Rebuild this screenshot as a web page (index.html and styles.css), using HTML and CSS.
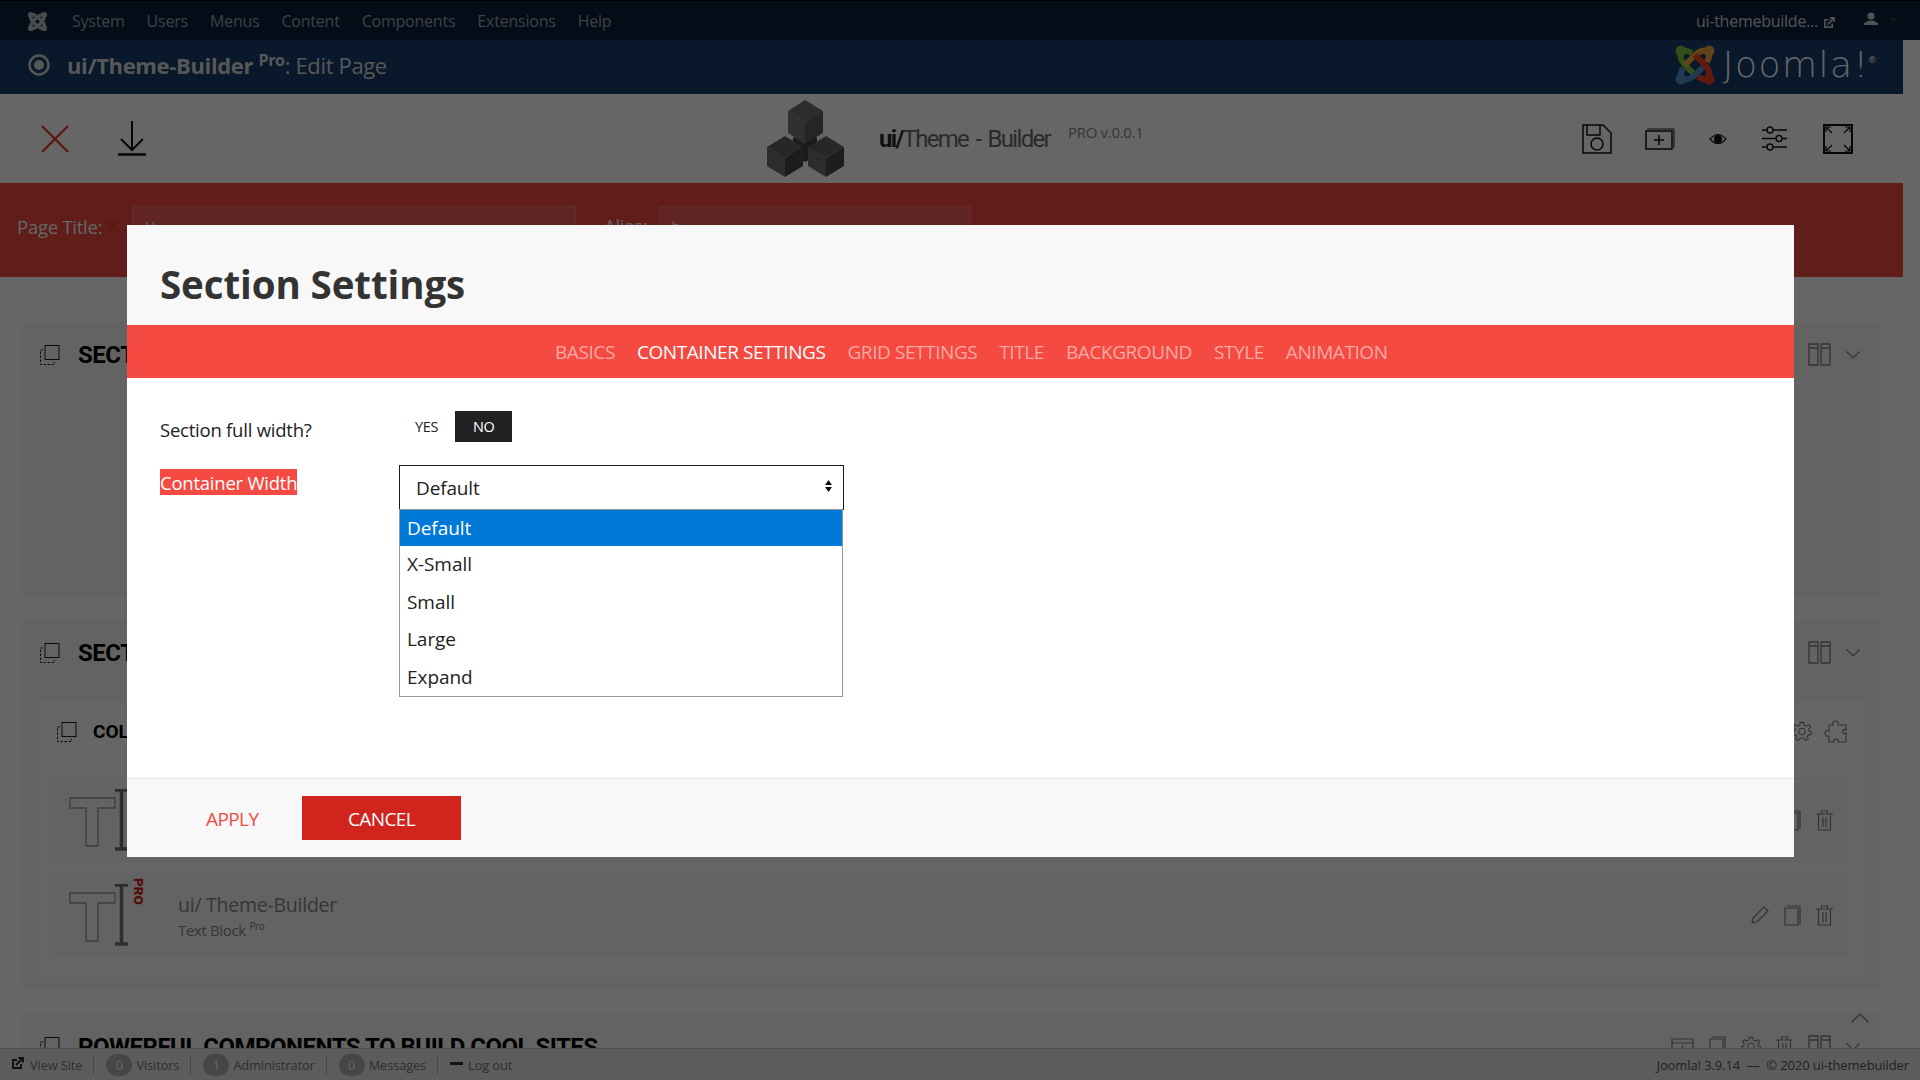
FILE: index.html
```html
<!DOCTYPE html>
<html lang="en">
<head>
<meta charset="utf-8">
<title>ui/Theme-Builder Pro: Edit Page</title>
<link rel="stylesheet" href="styles.css">
</head>
<body>
<div class="page">
  <nav class="topbar">
    <svg class="topmark" viewBox="0 0 40 40"><g fill="none" stroke="#b7bcc4" stroke-width="7"><path d="M6 6Q4 14 10 20L20 30M6 6Q12 5 17 8"/><path d="M34 6Q26 4 20 10L10 20M34 6Q35 12 32 17"/><path d="M34 34Q36 26 30 20L20 10M34 34Q28 35 23 32"/><path d="M6 34Q14 36 20 30L30 20M6 34Q5 28 8 23"/></g><g fill="#b7bcc4"><circle cx="6" cy="6" r="6"/><circle cx="34" cy="6" r="6"/><circle cx="34" cy="34" r="6"/><circle cx="6" cy="34" r="6"/></g></svg>
    <ul class="menu">
      <li>System</li><li>Users</li><li>Menus</li><li>Content</li><li>Components</li><li>Extensions</li><li>Help</li>
    </ul>
    <div class="topright">
      <span>ui-themebuilde...</span>
      <svg class="ext" viewBox="0 0 12 12"><path d="M9 7v4H1V3h4" fill="none" stroke="#c8ced6" stroke-width="1.800"/><path d="M4 8l6-6M6.500 1H11v4.500" fill="none" stroke="#c8ced6" stroke-width="1.800"/></svg>
      <svg class="usr" viewBox="0 0 14 13"><circle cx="7" cy="4" r="3.600" fill="#c8ced6"/><path d="M0 13V11L5 8.500H9L14 11V13Z" fill="#c8ced6"/></svg>
      <i class="caret"></i>
    </div>
  </nav>
  <div class="subhead">
    <svg class="target" viewBox="0 0 22 22"><circle cx="11" cy="11" r="9.500" fill="none" stroke="#d8dadd" stroke-width="2.400"/><circle cx="11" cy="11" r="5" fill="#d8dadd"/></svg>
    <h1 class="pagehead"><b>ui/Theme-Builder</b> <sup>Pro</sup>: Edit Page</h1>
    <div class="jlogo">
      <svg class="jmark" viewBox="0 0 40 40"><g fill="none" stroke-width="6"><path d="M6 6Q4 14 10 20L20 30M6 6Q12 5 17 8" stroke="#7fc242"/><path d="M34 6Q26 4 20 10L10 20M34 6Q35 12 32 17" stroke="#f4a641"/><path d="M6 34Q14 36 20 30L30 20M6 34Q5 28 8 23" stroke="#5091cd"/><path d="M34 34Q36 26 30 20L20 10M34 34Q28 35 23 32" stroke="#f44321"/></g><circle cx="6" cy="6" r="5.500" fill="#7fc242"/><circle cx="34" cy="6" r="5.500" fill="#f4a641"/><circle cx="34" cy="34" r="5.500" fill="#f44321"/><circle cx="6" cy="34" r="5.500" fill="#5091cd"/></svg>
      <span class="jword">Joomla!</span><sup class="jreg">®</sup>
    </div>
  </div>
  <div class="content">
    <header class="toolbar">
      <div class="tool-left">
        <svg class="ic-close" viewBox="0 0 28 28"><path d="M1 1L27 27M27 1L1 27" fill="none" stroke="#e6402c" stroke-width="2.400"/></svg>
        <svg class="ic-down" viewBox="0 0 28 35"><path d="M14 0V28M3 18L14 29L25 18" fill="none" stroke="#111" stroke-width="2"/><path d="M0 33.500H28" stroke="#111" stroke-width="2.500"/></svg>
      </div>
      <div class="brand">
        <svg class="cubes" viewBox="0 0 77 78">
          <path d="M38 30L50 38L50 56L38 62L26 56L26 38Z" fill="#444"/>
          <path d="M38 0L56 11L38 22L21 11Z" fill="#6e6e6e"/><path d="M21 11L38 22V44L21 33Z" fill="#787878"/><path d="M56 11L38 22V44L56 33Z" fill="#5c5c5c"/>
          <path d="M18 36L36 47L18 58L0 47Z" fill="#626262"/><path d="M0 47L18 58V77L0 66Z" fill="#6e6e6e"/><path d="M36 47L18 58V77L36 66Z" fill="#4a4a4a"/>
          <path d="M59 36L77 47L59 58L41 47Z" fill="#626262"/><path d="M41 47L59 58V77L41 66Z" fill="#6e6e6e"/><path d="M77 47L59 58V77L77 66Z" fill="#4a4a4a"/>
        </svg>
        <span class="brandname"><b>ui/</b>Theme - Builder</span>
        <span class="brandver">PRO v.0.0.1</span>
      </div>
      <div class="tool-right">
        <svg class="ic30" viewBox="0 0 30 30"><path d="M1 1H21L29 9V29H1Z" fill="none" stroke="#111" stroke-width="1.500"/><path d="M5 1V11H18V1" fill="none" stroke="#111" stroke-width="1.500"/><circle cx="15" cy="20" r="6" fill="none" stroke="#111" stroke-width="1.500"/></svg>
        <svg class="ic-newtab" viewBox="0 0 30 23"><path d="M1 4H27V22H1Z" fill="none" stroke="#111" stroke-width="1.500"/><path d="M2 2H29V21" fill="none" stroke="#222" stroke-width="1"/><path d="M14 8V18M9 13H19" stroke="#111" stroke-width="1.500"/></svg>
        <svg class="ic-eye" viewBox="0 0 18 12"><path d="M1 6Q9 -3 17 6Q9 15 1 6Z" fill="none" stroke="#111" stroke-width="1.200"/><circle cx="9" cy="6" r="4" fill="#111"/></svg>
        <svg class="ic-sliders" viewBox="0 0 25 25"><g fill="none" stroke="#111" stroke-width="1.400"><path d="M0 4H5M11 4H25M0 12.500H14M20 12.500H25M0 21H5M11 21H25"/><circle cx="8" cy="4" r="3"/><circle cx="17" cy="12.500" r="3"/><circle cx="8" cy="21" r="3"/></g></svg>
        <svg class="ic30" viewBox="0 0 30 30"><path d="M1 1H29V29H1Z" fill="none" stroke="#111" stroke-width="2"/><path d="M3 3L9 9M3 8V3H8M27 3L21 9M27 8V3H22M3 27L9 21M3 22V27H8M27 27L21 21M27 22V27H22" fill="none" stroke="#111" stroke-width="1.200"/></svg>
      </div>
    </header>
    <form class="titleband">
      <label class="tlabel">Page Title: <em>*</em></label>
      <span class="tinput t1">H</span>
      <label class="tlabel alias">Alias:</label>
      <span class="tinput t2">h</span>
    </form>
    <main class="builder">
      <section class="sec sec1">
        <div class="sechead">
          <svg class="ic-sel" viewBox="0 0 20 20"><rect x="5" y="0.500" width="14" height="14" fill="none" stroke="#222"/><path d="M3 5H0.500V19.500H14.500V17" fill="none" stroke="#222" stroke-dasharray="2.500 1.500"/></svg>
          <h2>SECTION</h2>
          <div class="secicons">
            <svg class="ic-cols" viewBox="0 0 23 23"><path d="M1 1H10V22H1ZM13 1H22V22H13ZM1 5H10M13 5H22" fill="none" stroke="#808080" stroke-width="1.300"/></svg>
            <svg class="ic-chev" viewBox="0 0 14 8"><path d="M0.500 0.500L7 7L13.500 0.500" fill="none" stroke="#808080" stroke-width="1.200"/></svg>
          </div>
        </div>
      </section>
      <section class="sec sec2">
        <div class="sechead">
          <svg class="ic-sel" viewBox="0 0 20 20"><rect x="5" y="0.500" width="14" height="14" fill="none" stroke="#222"/><path d="M3 5H0.500V19.500H14.500V17" fill="none" stroke="#222" stroke-dasharray="2.500 1.500"/></svg>
          <h2>SECTION</h2>
          <div class="secicons">
            <svg class="ic-cols" viewBox="0 0 23 23"><path d="M1 1H10V22H1ZM13 1H22V22H13ZM1 5H10M13 5H22" fill="none" stroke="#808080" stroke-width="1.300"/></svg>
            <svg class="ic-chev" viewBox="0 0 14 8"><path d="M0.500 0.500L7 7L13.500 0.500" fill="none" stroke="#808080" stroke-width="1.200"/></svg>
          </div>
        </div>
        <div class="col">
          <div class="colhead">
            <svg class="ic-sel" viewBox="0 0 20 20"><rect x="5" y="0.500" width="14" height="14" fill="none" stroke="#222"/><path d="M3 5H0.500V19.500H14.500V17" fill="none" stroke="#222" stroke-dasharray="2.500 1.500"/></svg>
            <h3>COLUMN</h3>
            <div class="colicons">
              <svg class="ic-gear" viewBox="0 0 22 22"><circle cx="11" cy="11" r="3.500" fill="none" stroke="#808080" stroke-width="1.200"/><path d="M9 1H13L13.500 4L16 5L18.500 3.500L20.500 6L18.500 8L19 10.500L21.500 11.500L20.500 15L18 14.500L16.500 17L18 19L15 21L13.500 18.500H8.500L7 21L4 19L5.500 17L4 14.500L1.500 15L0.500 11.500L3 10.500L3.500 8L1.500 6L3.500 3.500L6 5L8.500 4Z" fill="none" stroke="#808080" stroke-width="1.200"/></svg>
              <svg class="ic-puzzle" viewBox="0 0 23 23"><path d="M5 5H9Q8 1 11.500 1Q15 1 14 5H22V10Q19 8.500 18.500 11.500Q19 15 22 13V22H14Q15 19 12 19Q9 19 10 22H5V16Q1 17.500 1 13Q1 9.500 5 11Z" fill="none" stroke="#808080" stroke-width="1.200"/></svg>
            </div>
          </div>
          <div class="block">
            <svg class="ic-t" viewBox="0 0 60 62"><path d="M1 9H46V19H29V57H17V19H1Z" fill="none" stroke="#9a9a9a" stroke-width="1.300"/><path d="M46 1H59M46 60H59M52.500 1V60" fill="none" stroke="#707070" stroke-width="3.500"/></svg>
            <div class="blocktext"><strong>ui/ Theme-Builder</strong><small>Text Block <sup>Pro</sup></small></div>
            <div class="blockicons">
              <svg class="ic-pen" viewBox="0 0 18 18"><path d="M1 17L2.500 11.500L13 1L17 5L6.500 15.500Z" fill="none" stroke="#808080" stroke-width="1.200"/></svg>
              <svg class="ic-dup" viewBox="0 0 17 21"><path d="M1 3H14V20H1Z M3 1H16V19" fill="none" stroke="#808080" stroke-width="1.200"/></svg>
              <svg class="ic-trash" viewBox="0 0 17 21"><path d="M0 4H17M5.500 4V1H11.500V4M2.500 4V20H14.500V4M7 7V17M10 7V17" fill="none" stroke="#808080" stroke-width="1.200"/></svg>
            </div>
          </div>
          <div class="block">
            <svg class="ic-t" viewBox="0 0 60 62"><path d="M1 9H46V19H29V57H17V19H1Z" fill="none" stroke="#9a9a9a" stroke-width="1.300"/><path d="M46 1H59M46 60H59M52.500 1V60" fill="none" stroke="#707070" stroke-width="3.500"/></svg>
            <span class="probadge">PRO</span>
            <div class="blocktext"><strong>ui/ Theme-Builder</strong><small>Text Block <sup>Pro</sup></small></div>
            <div class="blockicons">
              <svg class="ic-pen" viewBox="0 0 18 18"><path d="M1 17L2.500 11.500L13 1L17 5L6.500 15.500Z" fill="none" stroke="#808080" stroke-width="1.200"/></svg>
              <svg class="ic-dup" viewBox="0 0 17 21"><path d="M1 3H14V20H1Z M3 1H16V19" fill="none" stroke="#808080" stroke-width="1.200"/></svg>
              <svg class="ic-trash" viewBox="0 0 17 21"><path d="M0 4H17M5.500 4V1H11.500V4M2.500 4V20H14.500V4M7 7V17M10 7V17" fill="none" stroke="#808080" stroke-width="1.200"/></svg>
            </div>
          </div>
        </div>
      </section>
      <section class="sec sec3">
        <svg class="ic-up" viewBox="0 0 18 10"><path d="M0.500 9.500L9 1L17.500 9.500" fill="none" stroke="#808080" stroke-width="1.300"/></svg>
        <div class="sechead">
          <svg class="ic-sel" viewBox="0 0 20 20"><rect x="5" y="0.500" width="14" height="14" fill="none" stroke="#222"/><path d="M3 5H0.500V19.500H14.500V17" fill="none" stroke="#222" stroke-dasharray="2.500 1.500"/></svg>
          <h2>POWERFUL COMPONENTS TO BUILD COOL SITES</h2>
          <div class="secicons wide">
            <svg class="ic-newtab2" viewBox="0 0 23 23"><path d="M1 4H22V22H1ZM1 8H22M11.500 10V20M6.500 15H16.500" fill="none" stroke="#808080" stroke-width="1.200"/></svg>
            <svg class="ic-dup" viewBox="0 0 17 21"><path d="M1 3H14V20H1Z M3 1H16V19" fill="none" stroke="#808080" stroke-width="1.200"/></svg>
            <svg class="ic-gear" viewBox="0 0 22 22"><circle cx="11" cy="11" r="3.500" fill="none" stroke="#808080" stroke-width="1.200"/><path d="M9 1H13L13.500 4L16 5L18.500 3.500L20.500 6L18.500 8L19 10.500L21.500 11.500L20.500 15L18 14.500L16.500 17L18 19L15 21L13.500 18.500H8.500L7 21L4 19L5.500 17L4 14.500L1.500 15L0.500 11.500L3 10.500L3.500 8L1.500 6L3.500 3.500L6 5L8.500 4Z" fill="none" stroke="#808080" stroke-width="1.200"/></svg>
            <svg class="ic-trash" viewBox="0 0 17 21"><path d="M0 4H17M5.500 4V1H11.500V4M2.500 4V20H14.500V4M7 7V17M10 7V17" fill="none" stroke="#808080" stroke-width="1.200"/></svg>
            <svg class="ic-cols" viewBox="0 0 23 23"><path d="M1 1H10V22H1ZM13 1H22V22H13ZM1 5H10M13 5H22" fill="none" stroke="#808080" stroke-width="1.300"/></svg>
            <svg class="ic-chev" viewBox="0 0 14 8"><path d="M0.500 0.500L7 7L13.500 0.500" fill="none" stroke="#808080" stroke-width="1.200"/></svg>
          </div>
        </div>
      </section>
    </main>
  </div>
  <footer class="status">
    <svg class="st-ext" viewBox="0 0 12 12"><path d="M9 7v4H1V3h4" fill="none" stroke="#222" stroke-width="1.800"/><path d="M4 8l6-6M6.500 1H11v4.500" fill="none" stroke="#222" stroke-width="1.800"/></svg>
    <span class="st-text">View Site</span><i class="st-sep"></i>
    <b class="st-badge">0</b><span class="st-text">Visitors</span><i class="st-sep"></i>
    <b class="st-badge">1</b><span class="st-text">Administrator</span><i class="st-sep"></i>
    <b class="st-badge">0</b><span class="st-text">Messages</span><i class="st-sep"></i>
    <i class="st-minus"></i><span class="st-text">Log out</span>
    <span class="st-right">Joomla! 3.9.14 &nbsp;—&nbsp; © 2020 ui-themebuilder</span>
  </footer>
</div>
<div class="backdrop">
  <div class="modal">
    <div class="modal-head"><h2>Section Settings</h2></div>
    <ul class="tabs">
      <li>BASICS</li><li class="on">CONTAINER SETTINGS</li><li>GRID SETTINGS</li><li>TITLE</li><li>BACKGROUND</li><li>STYLE</li><li>ANIMATION</li>
    </ul>
    <div class="modal-body">
      <div class="field">
        <label class="flabel">Section full width?</label>
        <div class="toggle"><span class="yes">YES</span><span class="no">NO</span></div>
      </div>
      <div class="field field2">
        <label class="flabel"><span class="hl">Container Width</span></label>
        <div class="selectwrap">
          <div class="selectbox"><span>Default</span>
            <svg class="updown" viewBox="0 0 7 12"><path d="M3.500 0L7 5H0ZM3.500 12L0 7H7Z" fill="#111"/></svg>
          </div>
          <ul class="options">
            <li class="sel">Default</li><li>X-Small</li><li>Small</li><li>Large</li><li>Expand</li>
          </ul>
        </div>
      </div>
    </div>
    <div class="modal-foot">
      <button class="apply" type="button">APPLY</button>
      <button class="cancel" type="button">CANCEL</button>
    </div>
  </div>
</div>
</body>
</html>
```
FILE: styles.css
```css
* { box-sizing: border-box; }
html, body { margin: 0; height: 1080px; overflow: hidden; }
body { font-family: "Open Sans", "Noto Sans", sans-serif; background: #fff; position: relative; width: 1920px; }
ul { list-style: none; margin: 0; padding: 0; }
h1, h2, h3 { margin: 0; font-weight: 400; }
.page { width: 1920px; height: 1080px; display: flex; flex-direction: column; position: relative; overflow: hidden; background: #fff; }

.topbar { height: 40px; flex: none; background: #0c1e3a; border-top: 1px solid #000; display: flex; align-items: center; padding-left: 28px; padding-right: 23px; }
.topmark { width: 19px; height: 19px; margin-top: 2px; }
.menu { display: flex; gap: 22px; margin-left: 25px; font-size: 16px; letter-spacing: -0.220px; color: #97a3b0; }
.topright { margin-left: auto; display: flex; align-items: center; font-size: 16px; letter-spacing: -0.250px; color: #ccd2d9; }
.ext { width: 11px; height: 11px; margin-left: 6px; margin-top: 3px; }
.usr { width: 14px; height: 13px; margin-left: 29px; margin-top: -4px; }
.caret { width: 0; height: 0; border: 4px solid transparent; border-top: 4px solid #333; margin-left: 11px; margin-top: 2px; }

.subhead { height: 54px; flex: none; width: 1903px; background: #193c6b; display: flex; align-items: center; padding-left: 28px; padding-right: 27px; color: #d8dadd; }
.target { width: 22px; height: 22px; margin-top: -4px; }
.pagehead { margin-left: 17px; margin-top: -4px; font-size: 22px; letter-spacing: -0.350px; white-space: nowrap; }
.pagehead sup { font-size: 16px; font-weight: 700; }
.pagehead b { font-weight: 700; }
.jlogo { margin-left: auto; display: flex; align-items: center; color: #fff; }
.jmark { width: 40px; height: 40px; margin-top: -4px; }
.jword { font-family: "DejaVu Sans", sans-serif; font-weight: 200; font-size: 36px; line-height: 40px; margin-left: 8px; letter-spacing: 1.500px; margin-top: -5px; }
.jreg { font-size: 9px; align-self: flex-start; margin-top: 4px; margin-left: -1px; }

.content { width: 1903px; flex: none; display: flex; flex-direction: column; }
.toolbar { height: 89px; background: #fff; display: flex; align-items: center; padding-left: 41px; padding-right: 50px; }
.tool-left { display: flex; align-items: center; gap: 49px; width: 726px; flex: none; }
.ic-close { width: 28px; height: 28px; }
.ic-down { width: 28px; height: 35px; }
.brand { display: flex; align-items: flex-start; flex: none; }
.cubes { width: 77px; height: 78px; }
.brandname { font-family: "Roboto", sans-serif; font-size: 24px; line-height: 30px; margin-left: 35px; margin-top: 24px; letter-spacing: -1.700px; word-spacing: 3px; color: #6a6a6a; white-space: nowrap; }
.brandname b { font-weight: 700; color: #2a2a2a; }
.brandver { font-size: 15px; letter-spacing: -0.300px; color: #888; margin-left: 18px; margin-top: 22px; white-space: nowrap; }
.tool-right { margin-left: auto; display: flex; align-items: center; gap: 33px; }
.ic30 { width: 30px; height: 30px; }
.ic-newtab { width: 30px; height: 23px; }
.ic-eye { width: 18px; height: 12px; margin-left: 1px; }
.ic-sliders { width: 25px; height: 25px; margin-left: 2px; }
.tool-right > :last-child { margin-left: 3px; }

.titleband { height: 94px; background: #f04a41; display: flex; align-items: flex-start; padding-top: 23px; padding-left: 17px; color: #fff; }
.tlabel { font-size: 18.500px; letter-spacing: -0.250px; width: 115px; flex: none; line-height: 26px; margin-top: 8px; }
.tlabel em { color: #d63c30; font-style: normal; }
.alias { width: auto; margin-left: 28px; margin-top: 7px; }
.tinput { height: 40px; background: #f25f57; border: 1px solid #f56f68; font-size: 14px; padding: 10px 12px; }
.t1 { width: 444px; }
.t2 { width: 312px; margin-left: 11px; }

.builder { background: #fff; padding: 45px 22px 0; display: flex; flex-direction: column; height: 771px; }
.sec { background: #f7f7f7; flex: none; position: relative; }
.sec1 { height: 275px; }
.sec2 { height: 370px; margin-top: 23px; }
.sec3 { margin-top: 23px; height: 100px; }
.sechead { display: flex; align-items: center; height: 65px; padding-left: 18px; padding-right: 21px; }
.sec3 .sechead { height: 67px; }
.ic-sel { width: 20px; height: 20px; flex: none; }
.sechead h2 { font-family: "Roboto", sans-serif; font-weight: 700; font-size: 24px; letter-spacing: -0.500px; margin-left: 18px; color: #000; white-space: nowrap; }
.secicons { margin-left: auto; display: flex; align-items: center; gap: 15px; }
.ic-newtab2 { width: 23px; height: 23px; }
.ic-cols { width: 23px; height: 23px; }
.ic-chev { width: 14px; height: 8px; }
.ic-up { position: absolute; right: 12px; top: 0; width: 18px; height: 10px; }
.col { margin: 17px 17px 0; background: #fff; height: 273px; padding: 0 16px 0 10px; }
.colhead { display: flex; align-items: center; height: 75px; padding: 0 1px 16px 8px; }
.colhead h3 { font-family: "Roboto", sans-serif; font-weight: 700; font-size: 19px; margin-left: 16px; color: #000; white-space: nowrap; }
.colicons { margin-left: auto; display: flex; gap: 12px; align-items: center; }
.ic-gear { width: 20px; height: 21px; }
.ic-puzzle { width: 23px; height: 23px; }
.block { height: 86px; background: #f7f7f7; display: flex; align-items: center; padding-left: 20px; padding-right: 15px; position: relative; }
.block + .block { margin-top: 9px; }
.ic-t { width: 60px; height: 62px; flex: none; }
.probadge { position: absolute; left: 83px; top: 6px; font-family: "Roboto", sans-serif; font-weight: 900; font-size: 13.500px; color: #d0241c; writing-mode: vertical-rl; line-height: 14px; }
.blocktext { margin-left: 49px; margin-top: 5px; display: flex; flex-direction: column; color: #888; }
.blocktext strong { font-weight: 400; font-size: 19.500px; line-height: 26px; letter-spacing: -0.250px; }
.blocktext small { font-size: 15px; line-height: 25px; letter-spacing: -0.350px; }
.blocktext sup { font-size: 10px; line-height: 0; }
.blockicons { margin-left: auto; display: flex; align-items: center; gap: 15px; }
.ic-pen { width: 18px; height: 18px; }
.ic-dup, .ic-trash { width: 17px; height: 21px; }

.status { position: absolute; left: 0; right: 0; bottom: 0; height: 32px; background: #e6e6e6; border-top: 1px solid #c4c4c4; display: flex; align-items: center; padding-left: 12px; padding-right: 11px; font-size: 12.800px; letter-spacing: -0.100px; color: #777; }
.st-ext { width: 12px; height: 12px; margin-right: 6px; margin-top: -3px; }
.st-sep { width: 1px; height: 18px; background: #aaa; margin: 0 12px 0 11px; }
.st-badge { width: 26px; height: 22px; border-radius: 11px; background: #b0b0b0; color: #fff; font-weight: 400; text-align: center; line-height: 22px; margin-right: 4px; }
.st-minus { width: 13px; height: 3px; background: #333; margin-right: 5px; margin-top: -3px; }
.st-right { margin-left: auto; color: #555; font-size: 13px; }

.backdrop { position: absolute; inset: 0; background: rgba(0, 0, 0, .6); padding: 225px 126px 223px 127px; }
.modal { height: 632px; background: #fff; display: flex; flex-direction: column; }
.modal-head { height: 100px; background: #f8f8f8; padding: 31px 33px 0; }
.modal-head h2 { font-size: 38.500px; font-weight: 700; letter-spacing: -0.100px; line-height: 56px; color: #333; }
.tabs { height: 53px; background: #f44a41; display: flex; align-items: center; gap: 22px; padding-left: 428px; font-size: 19px; letter-spacing: -0.420px; color: #fba9a4; }
.tabs .on { color: #fff; }
.modal-body { flex: 1; padding: 33px 33px 0; color: #222; }
.field { display: flex; align-items: flex-start; }
.field2 { margin-top: 22px; }
.flabel { width: 239px; flex: none; font-size: 18.500px; letter-spacing: -0.230px; line-height: 26px; padding-top: 6px; }
.field2 .flabel { padding-top: 4px; }
.hl { background: #f44a41; color: #fff; display: inline-block; height: 26px; line-height: 28px; }
.toggle { display: flex; align-items: center; height: 31px; font-size: 14.500px; letter-spacing: -0.300px; }
.yes { margin-left: 16px; margin-right: 17px; margin-top: -1px; }
.no { width: 57px; height: 31px; background: #222; color: #fff; display: flex; align-items: center; justify-content: center; }
.selectwrap { position: relative; width: 445px; }
.selectbox { height: 45px; border: 1.500px solid #1a1a1a; background: #fff; display: flex; align-items: center; justify-content: space-between; padding: 0 11px 0 16px; font-size: 19px; letter-spacing: -0.150px; }
.updown { width: 7px; height: 12px; margin-top: -3px; }
.options { position: absolute; left: 0; top: 44px; width: 444px; background: #fff; border: 1px solid #999; font-size: 19px; letter-spacing: -0.050px; z-index: 2; }
.options li { height: 37.500px; padding-left: 7px; line-height: 36px; }
.options .sel { height: 36px; background: #0078d7; color: #fff; }
.modal-foot { height: 79px; flex: none; background: #f8f8f8; border-top: 1px solid #e5e5e5; display: flex; align-items: flex-start; padding-top: 17px; padding-left: 79px; }
.modal-foot button { font: inherit; font-size: 19px; letter-spacing: -0.600px; border: 0; background: none; padding: 1px 0 0; height: 44px; }
.apply { color: #f44a41; width: 52px; }
.cancel { color: #fff; margin-left: 44px; width: 159px; background: #d0241c !important; }
```
